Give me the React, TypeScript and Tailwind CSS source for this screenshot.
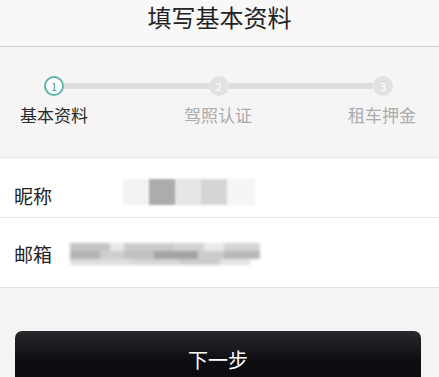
const font = { fontFamily: '"Noto Sans CJK SC", "Noto Sans", sans-serif' };

function StepDot({ n, active }: { n: number; active?: boolean }) {
  return active ? (
    <div className="w-[20px] h-[20px] rounded-full border-2 border-[#5fb5a8] bg-white flex items-center justify-center text-[11px] leading-none text-[#3f9f91]">
      {n}
    </div>
  ) : (
    <div className="w-[20px] h-[20px] rounded-full bg-[#e2e2e2] flex items-center justify-center text-[11px] leading-none text-white">
      {n}
    </div>
  );
}

export default function App() {
  return (
    <div className="w-[439px] h-[377px] overflow-hidden bg-[#f4f4f4]" style={font}>
      <header className="h-[47px] bg-[#f8f8f8] border-b border-[#cfcfcf] flex items-center justify-center">
        <h1 className="text-[24px] leading-none text-[#222] -mt-[12px]">填写基本资料</h1>
      </header>

      <section className="h-[111px] pt-[29px] bg-[#f5f5f5] border-b border-[#e8e8e8]">
        <div className="flex items-center pl-[44px] pr-[46px]">
          <StepDot n={1} active />
          <div className="flex-1 h-[6px] bg-[#dedede]" />
          <StepDot n={2} />
          <div className="flex-1 h-[6px] bg-[#dedede]" />
          <StepDot n={3} />
        </div>
        <div className="flex justify-between pl-[20px] pr-[23px] mt-[9px] text-[17px] leading-[20px]">
          <span className="w-[68px] text-center text-[#2a2a2a]">基本资料</span>
          <span className="w-[68px] text-center text-[#ababab]">驾照认证</span>
          <span className="w-[68px] text-center text-[#ababab]">租车押金</span>
        </div>
      </section>

      <div className="bg-white border-b border-[#e2e2e2]">
        <div className="h-[60px] flex pl-[14px] pt-[28px] border-b border-[#e6e6e6]">
          <span className="text-[19px] leading-[20px] text-[#222] w-[40px]">昵称</span>
          <div className="ml-[69px] -mt-[7px] flex h-[26px] blur-[1px]">
            <div className="w-[26px] bg-[#f3f3f3]" />
            <div className="w-[26px] bg-[#acacac]" />
            <div className="w-[26px] bg-[#e6e6e6]" />
            <div className="w-[26px] bg-[#d6d6d6]" />
            <div className="w-[28px] bg-[#f5f5f5]" />
          </div>
        </div>
        <div className="h-[69px] flex pl-[14px] pt-[26px]">
          <span className="text-[19px] leading-[20px] text-[#222] w-[40px]">邮箱</span>
          <div className="ml-[16px] -mt-[1px] flex flex-col h-[22px] blur-[1.5px]">
            <div className="flex h-[8px]">
              <div className="w-[40px] bg-[#c4c4c4]" />
              <div className="w-[14px] bg-[#e8e8e8]" />
              <div className="w-[50px] bg-[#cbcbcb]" />
              <div className="w-[30px] bg-[#d4d4d4]" />
              <div className="w-[20px] bg-[#eaeaea]" />
              <div className="w-[36px] bg-[#d5d5d5]" />
            </div>
            <div className="flex h-[8px]">
              <div className="w-[30px] bg-[#b3b3b3]" />
              <div className="w-[24px] bg-[#cecece]" />
              <div className="w-[30px] bg-[#c0c0c0]" />
              <div className="w-[44px] bg-[#a3a3a3]" />
              <div className="w-[26px] bg-[#cccccc]" />
              <div className="w-[36px] bg-[#b8b8b8]" />
            </div>
            <div className="flex h-[6px]">
              <div className="w-[60px] bg-[#dedede]" />
              <div className="w-[50px] bg-[#d6d6d6]" />
              <div className="w-[40px] bg-[#cbcbcb]" />
              <div className="w-[30px] bg-[#e4e4e4]" />
            </div>
          </div>
        </div>
      </div>

      <div className="px-[15px] pt-[43px] pr-[18px]">
        <button className="w-full h-[60px] rounded-t-[7px] bg-gradient-to-b from-[#2a2a2e] via-[#0d0d12] to-[#0a0a10] text-white text-[20px] leading-none pb-[2px]">
          下一步
        </button>
      </div>
    </div>
  );
}
